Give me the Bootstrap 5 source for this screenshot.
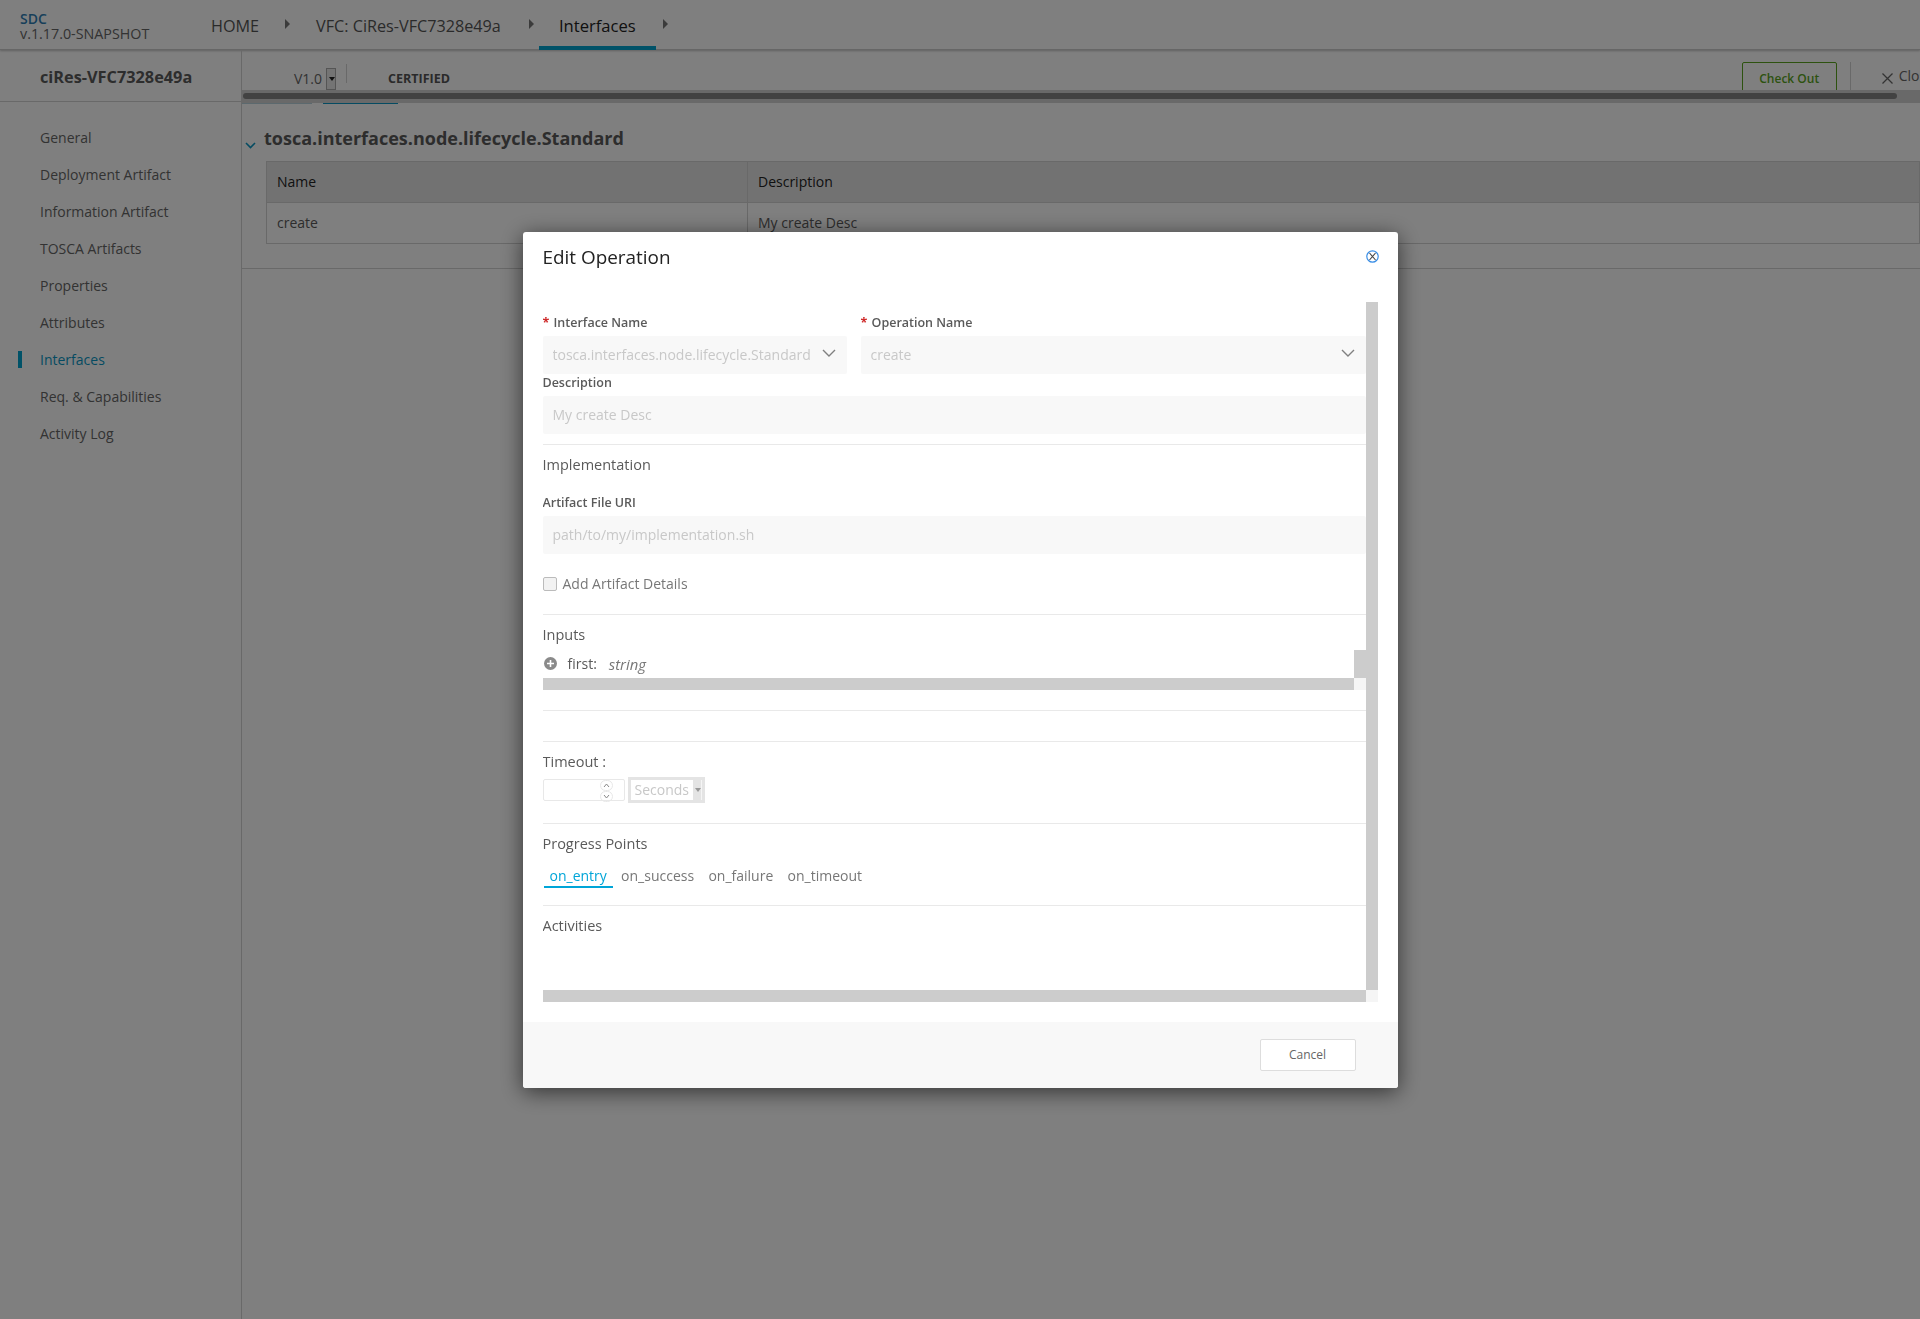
<!DOCTYPE html>
<html lang="en">
<head>
    <meta charset="UTF-8">
    <meta name="viewport" content="width=device-width, initial-scale=1.0">
    <title>SDC - Edit Operation</title>
    <link href="https://cdn.jsdelivr.net/npm/bootstrap@5.3.0/dist/css/bootstrap.min.css" rel="stylesheet">
    <style>
        body { font-family: "Open Sans", "Noto Sans", sans-serif; font-size: 14px; color: #5a5a5a; background: #fff; overflow: hidden; }

        /* top bar */
        .top-bar { height: 50px; padding-left: 20px; border-bottom: 1px solid #ccc; box-shadow: 0 1px 2px rgba(0,0,0,.25); }
        .brand-box { width: 191px; padding-top: 11px; line-height: 15px; }
        .brand-sdc { color: #2f7fb5; font-size: 14px; font-weight: 600; display: block; }
        .brand-ver { font-size: 14.3px; color: #666; display: block; }
        .crumb { font-size: 16.2px; color: #555; line-height: 20px; padding-top: 16px; }
        .crumb-on { color: #222; width: 117px; height: 50px; margin-left: 5px; text-align: center; font-size: 16.6px; border-bottom: 4px solid #00a5d0; }
        .crumb-arrow { width: 0; height: 0; border-left: 5px solid #777; border-top: 5px solid transparent; border-bottom: 5px solid transparent; margin-top: 19px; }
        .arrow-a { margin-left: 26px; }
        .arrow-b { margin-left: 28px; }
        .arrow-c { margin-left: 7px; }
        .crumb-vfc { margin-left: 26px; }

        /* left menu */
        .side-menu { width: 242px; height: 1269px; border-right: 1px solid #d2d2d2; flex: none; }
        .side-title { height: 52px; padding: 17px 0 0 40px; font-size: 16.3px; font-weight: 700; line-height: 20px; color: #5a5a5a; border-bottom: 1px solid #d2d2d2; }
        .side-list { padding-top: 17px; }
        .side-item { height: 37px; line-height: 37px; padding-left: 40px; color: #666; position: relative; }
        .side-on { color: #0a97c4; }
        .side-on::before { content: ""; position: absolute; left: 18px; top: 10px; width: 4px; height: 17px; background: #00a5d0; }

        /* workspace */
        .work-area { flex: 1; min-width: 0; }
        .strip-view { height: 40px; overflow: hidden; }
        .strip-inner { width: 1692px; height: 40px; padding-left: 52px; }
        .ver-text { margin-top: 19px; line-height: 20px; color: #666; }
        .ver-arrow { width: 10px; height: 22px; margin: 18px 0 0 4px; background: #e8e8e8; border: 1px solid #aaa; }
        .ver-arrow::after { content: ""; display: block; margin: 8px 0 0 2px; width: 0; border-top: 4px solid #222; border-left: 3px solid transparent; border-right: 3px solid transparent; }
        .ver-sep { width: 1px; height: 19px; margin: 14px 0 0 10px; background: #d2d2d2; }
        .state-text { font-size: 12.5px; font-weight: 700; color: #555; margin: 21px 0 0 41px; line-height: 16px; }
        .checkout-btn { width: 95px; height: 40px; margin: 12px 13px 0 auto; border: 1px solid #5aa51e; border-radius: 2px 2px 0 0; color: #5aa51e; font-size: 12px; font-weight: 600; text-align: center; line-height: 31px; }
        .close-sep { width: 1px; height: 28px; margin-top: 12px; background: #d2d2d2; }
        .close-link { color: #666; line-height: 20px; margin: 16px 0 0 31px; }
        .close-icon { margin: 7px 6px 0 0; }
        .strip-track { height: 13px; padding: 3px 23px 4px 1px; background: #d2d2d2; }
        .strip-thumb { height: 6px; background: #848484; border-radius: 3px; }
        .tab-bits { height: 2px; }
        .tab-bit-a { width: 70px; height: 1px; background: #b9d3dd; }
        .tab-bit-b { width: 75px; height: 1px; margin-left: 11px; background: #0a97c4; }
        .iface-box { height: 164px; border-bottom: 1px solid #d2d2d2; padding-top: 20px; }
        .iface-title { font-size: 18px; font-weight: 700; line-height: 26px; color: #5a5a5a; margin-left: 22px; position: relative; }
        .iface-chev { position: absolute; left: -19px; top: 17px; }
        .iface-table { width: 1654px; margin: 10px 0 0 24px; border: 1px solid #d2d2d2; }
        .iface-row { height: 40px; line-height: 40px; }
        .iface-head { height: 41px; background: #e5e5e5; color: #222; border-bottom: 1px solid #d2d2d2; }
        .iface-c1 { width: 481px; padding-left: 10px; border-right: 1px solid #d2d2d2; flex: none; }
        .iface-c2 { padding-left: 10px; }

        /* dialog */
        .op-dialog { max-width: 875px; margin-top: 232px; }
        .op-content { height: 856px; border: 0; border-radius: 3px; box-shadow: 0 4px 22px rgba(0,0,0,.6); }
        .op-header { height: 70px; padding: 0 20px; align-items: flex-start; }
        .op-title { font-size: 18.9px; font-weight: 500; color: #222; line-height: 24px; margin-top: 13px; }
        .op-close { margin: 18px -1px 0 0; }
        .op-scroll { display: grid; grid-template-columns: 823px 12px; grid-template-rows: 688px 12px; margin-left: 20px; }
        .op-pane { padding-top: 12px; overflow: hidden; }
        .bar-fill { background: #ccc; }
        .bar-corner { background: #f5f5f5; }
        .op-footer { height: 66px; margin-top: 20px; background: #f8f8f8; border: 0; padding: 0 42px 0 0; border-radius: 0 0 3px 3px; }
        .cancel-btn { width: 96px; height: 32px; margin: 0; padding: 0; background: #fff; border: 1px solid #ddd; border-radius: 2px; color: #666; font-size: 12px; }

        .field-label { display: block; height: 16px; line-height: 18px; margin-bottom: 6px; font-size: 12.5px; font-weight: 600; color: #5a5a5a; }
        .label-artifact { margin-top: 19px; }
        .req-star { color: #cf2a2a; font-weight: 700; margin-right: 1px; }
        .field-box, .field-box:disabled { height: 38px; padding: 0 10px 2px; border: 0; border-radius: 2px; background-color: #f8f8f8; color: #c8c8c8; font-size: 14px; opacity: 1; }
        .field-pick, .field-pick:disabled { padding-right: 28px; background-image: url("data:image/svg+xml,%3csvg xmlns='http://www.w3.org/2000/svg' viewBox='0 0 14 8'%3e%3cpath fill='none' stroke='%23808080' stroke-width='1.4' d='M1 1l6 6 6-6'/%3e%3c/svg%3e"); background-size: 14px 8px; background-position: right 11px top 13px; }
        .col-iface { width: 304px; }
        .col-op { flex: 1; margin-left: 14px; }
        .sect-line { height: 1px; margin: 10px 0 0; background: #e9e9e9; border: 0; opacity: 1; }
        .line-20 { margin-top: 20px; }
        .line-30 { margin-top: 30px; }
        .line-17 { margin-top: 17px; }
        .sect-title { height: 20px; line-height: 20px; margin-top: 10px; font-size: 14.5px; color: #5a5a5a; }
        .chk-row { height: 20px; line-height: 20px; margin-top: 20px; color: #777; }
        .chk-box, .chk-box:disabled { width: 14px; height: 14px; margin: 0 6px 0 0; border: 1px solid #bbb; border-radius: 2px; background-color: #f2f2f2; opacity: 1; }
        .inputs-box { display: grid; grid-template-columns: 811px 12px; grid-template-rows: 28px 12px; margin-top: 5px; }
        .input-row { padding: 4px 0 0 1px; line-height: 20px; }
        .plus-icon { margin-top: 3px; }
        .input-name { margin-left: 11px; color: #5a5a5a; }
        .input-type { margin-left: 12px; font-size: 14.8px; font-style: italic; color: #777; }
        .time-row { margin-top: 5px; height: 26px; }
        .time-input { width: 82px; height: 22px; margin-top: 2px; border: 1px solid #e8e8e8; border-radius: 2px; padding: 0 11px 0 0; }
        .spin-wrap { width: 13px; }
        .spin-btn { width: 13px; height: 11px; border: 1px solid #e8e8e8; border-radius: 6px; }
        .time-unit { width: 77px; height: 26px; margin-left: 3px; border: 3px solid #e4e4e4; padding-left: 4px; line-height: 20px; color: #c8c8c8; }
        .unit-arrow { width: 9px; height: 20px; margin-left: auto; background: #e4e4e4; border-right: 1px solid #f5f5f5; }
        .unit-arrow::after { content: ""; display: block; margin: 8px 0 0 2px; width: 0; border-top: 4px solid #999; border-left: 3px solid transparent; border-right: 3px solid transparent; }
        .point-tabs { margin: 12px 0 0 1px; gap: 2.3px; }
        .point-tabs .nav-link { height: 22px; padding: 0 6px; line-height: 20px; color: #777; border-bottom: 2px solid transparent; }
        .point-tabs .nav-link.active { color: #00a5d8; border-bottom-color: #00a5d8; }
    </style>
</head>
<body>
    <div class="top-bar d-flex">
        <div class="brand-box">
            <span class="brand-sdc">SDC</span>
            <span class="brand-ver">v.1.17.0-SNAPSHOT</span>
        </div>
        <div class="crumb">HOME</div>
        <div class="crumb-arrow arrow-a"></div>
        <div class="crumb crumb-vfc">VFC: CiRes-VFC7328e49a</div>
        <div class="crumb-arrow arrow-b"></div>
        <div class="crumb crumb-on">Interfaces</div>
        <div class="crumb-arrow arrow-c"></div>
    </div>

    <div class="d-flex">
        <div class="side-menu">
            <div class="side-title">ciRes-VFC7328e49a</div>
            <div class="side-list">
                <div class="side-item">General</div>
                <div class="side-item">Deployment Artifact</div>
                <div class="side-item">Information Artifact</div>
                <div class="side-item">TOSCA Artifacts</div>
                <div class="side-item">Properties</div>
                <div class="side-item">Attributes</div>
                <div class="side-item side-on">Interfaces</div>
                <div class="side-item">Req. &amp; Capabilities</div>
                <div class="side-item">Activity Log</div>
            </div>
        </div>
        <div class="work-area">
            <div class="strip-view">
                <div class="strip-inner d-flex">
                    <div class="ver-text">V1.0</div>
                    <div class="ver-arrow"></div>
                    <div class="ver-sep"></div>
                    <div class="state-text">CERTIFIED</div>
                    <div class="checkout-btn">Check Out</div>
                    <div class="close-sep"></div>
                    <div class="close-link d-flex">
                        <svg class="close-icon" width="11" height="11" viewBox="0 0 11 11"><path d="M.5.5l10 10M10.500.5l-10 10" stroke="#666" stroke-width="1.300" fill="none"/></svg>
                        <span>Close</span>
                    </div>
                </div>
            </div>
            <div class="strip-track"><div class="strip-thumb"></div></div>
            <div class="tab-bits d-flex">
                <div class="tab-bit-a"></div>
                <div class="tab-bit-b"></div>
            </div>
            <div class="iface-box">
                <div class="iface-title">
                    <svg class="iface-chev" width="11" height="7" viewBox="0 0 11 7"><path d="M1 1l4.500 4.500L10 1" stroke="#0a97c4" stroke-width="1.600" fill="none"/></svg>
                    tosca.interfaces.node.lifecycle.Standard
                </div>
                <div class="iface-table">
                    <div class="iface-row iface-head d-flex">
                        <div class="iface-c1">Name</div>
                        <div class="iface-c2">Description</div>
                    </div>
                    <div class="iface-row d-flex">
                        <div class="iface-c1">create</div>
                        <div class="iface-c2">My create Desc</div>
                    </div>
                </div>
            </div>
        </div>
    </div>

    <div class="modal-backdrop show"></div>
    <div class="modal d-block">
        <div class="modal-dialog op-dialog">
            <div class="modal-content op-content">
                <div class="modal-header op-header border-0 justify-content-between">
                    <div class="op-title">Edit Operation</div>
                    <svg class="op-close" width="13" height="13" viewBox="0 0 13 13"><circle cx="6.500" cy="6.500" r="5.700" stroke="#3a8ee6" stroke-width="1.200" fill="none"/><path d="M3.500 3l6 7M9.500 3l-6 7" stroke="#444" stroke-width="1.100" fill="none"/></svg>
                </div>
                <div class="op-scroll">
                    <div class="op-pane">
                        <div class="d-flex">
                            <div class="col-iface">
                                <label class="field-label"><span class="req-star">*</span> Interface Name</label>
                                <select class="form-select field-box field-pick" disabled><option>tosca.interfaces.node.lifecycle.Standard</option></select>
                            </div>
                            <div class="col-op">
                                <label class="field-label"><span class="req-star">*</span> Operation Name</label>
                                <select class="form-select field-box field-pick" disabled><option>create</option></select>
                            </div>
                        </div>
                        <label class="field-label">Description</label>
                        <input type="text" class="form-control field-box" value="My create Desc" disabled>
                        <hr class="sect-line">
                        <div class="sect-title">Implementation</div>
                        <label class="field-label label-artifact">Artifact File URI</label>
                        <input type="text" class="form-control field-box" value="path/to/my/implementation.sh" disabled>
                        <div class="chk-row d-flex align-items-center">
                            <input type="checkbox" class="form-check-input chk-box" disabled>
                            <span>Add Artifact Details</span>
                        </div>
                        <hr class="sect-line line-20">
                        <div class="sect-title">Inputs</div>
                        <div class="inputs-box">
                            <div class="input-row d-flex">
                                <svg class="plus-icon" width="13" height="13" viewBox="0 0 13 13"><circle cx="6.500" cy="6.500" r="6.500" fill="#8a8a8a"/><path d="M6.500 3v7M3 6.500h7" stroke="#fff" stroke-width="1.600"/></svg>
                                <span class="input-name">first:</span>
                                <span class="input-type">string</span>
                            </div>
                            <div class="bar-fill"></div>
                            <div class="bar-fill"></div>
                            <div class="bar-corner"></div>
                        </div>
                        <hr class="sect-line line-20">
                        <hr class="sect-line line-30">
                        <div class="sect-title">Timeout :</div>
                        <div class="time-row d-flex">
                            <div class="time-input d-flex justify-content-end">
                                <div class="spin-wrap">
                                    <div class="spin-btn d-flex align-items-center justify-content-center"><svg width="7" height="5" viewBox="0 0 7 5"><path d="M1 4l2.500-3L6 4" stroke="#888" fill="none"/></svg></div>
                                    <div class="spin-btn d-flex align-items-center justify-content-center"><svg width="7" height="5" viewBox="0 0 7 5"><path d="M1 1l2.500 3L6 1" stroke="#888" fill="none"/></svg></div>
                                </div>
                            </div>
                            <div class="time-unit d-flex">
                                <span>Seconds</span>
                                <div class="unit-arrow"></div>
                            </div>
                        </div>
                        <hr class="sect-line line-20">
                        <div class="sect-title">Progress Points</div>
                        <ul class="nav point-tabs">
                            <li class="nav-item"><a class="nav-link active" href="#">on_entry</a></li>
                            <li class="nav-item"><a class="nav-link" href="#">on_success</a></li>
                            <li class="nav-item"><a class="nav-link" href="#">on_failure</a></li>
                            <li class="nav-item"><a class="nav-link" href="#">on_timeout</a></li>
                        </ul>
                        <hr class="sect-line line-17">
                        <div class="sect-title">Activities</div>
                    </div>
                    <div class="bar-fill"></div>
                    <div class="bar-fill"></div>
                    <div class="bar-corner"></div>
                </div>
                <div class="modal-footer op-footer">
                    <button type="button" class="btn cancel-btn">Cancel</button>
                </div>
            </div>
        </div>
    </div>
    <script src="https://cdn.jsdelivr.net/npm/bootstrap@5.3.0/dist/js/bootstrap.bundle.min.js"></script>
</body>
</html>
